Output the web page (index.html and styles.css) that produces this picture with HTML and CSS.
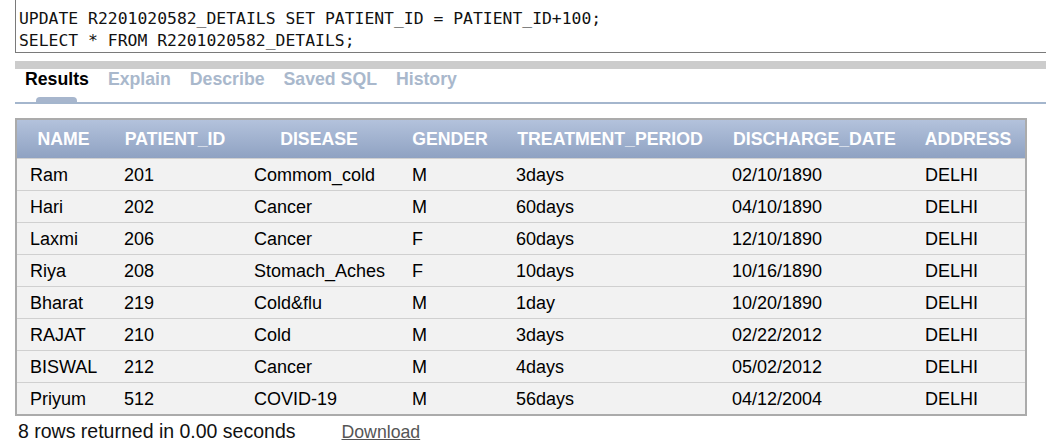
FILE: index.html
```html
<!DOCTYPE html>
<html>
<head>
<meta charset="utf-8">
<link rel="stylesheet" href="styles.css">
</head>
<body>
<div class="page">
  <div class="editor">
    <div class="code">UPDATE R2201020582_DETAILS SET PATIENT_ID = PATIENT_ID+100;</div>
    <div class="code">SELECT * FROM R2201020582_DETAILS;</div>
  </div>
  <div class="divider"></div>
  <div class="tabs">
    <span class="tab active">Results</span>
    <span class="tab">Explain</span>
    <span class="tab">Describe</span>
    <span class="tab">Saved SQL</span>
    <span class="tab">History</span>
  </div>
  <div class="results">
    <table class="grid">
      <colgroup>
        <col class="c1"><col class="c2"><col class="c3"><col class="c4"><col class="c5"><col class="c6"><col class="c7">
      </colgroup>
      <thead>
        <tr><th>NAME</th><th>PATIENT_ID</th><th>DISEASE</th><th>GENDER</th><th>TREATMENT_PERIOD</th><th>DISCHARGE_DATE</th><th>ADDRESS</th></tr>
      </thead>
      <tbody>
        <tr><td>Ram</td><td>201</td><td>Commom_cold</td><td>M</td><td>3days</td><td>02/10/1890</td><td>DELHI</td></tr>
        <tr><td>Hari</td><td>202</td><td>Cancer</td><td>M</td><td>60days</td><td>04/10/1890</td><td>DELHI</td></tr>
        <tr><td>Laxmi</td><td>206</td><td>Cancer</td><td>F</td><td>60days</td><td>12/10/1890</td><td>DELHI</td></tr>
        <tr><td>Riya</td><td>208</td><td>Stomach_Aches</td><td>F</td><td>10days</td><td>10/16/1890</td><td>DELHI</td></tr>
        <tr><td>Bharat</td><td>219</td><td>Cold&amp;flu</td><td>M</td><td>1day</td><td>10/20/1890</td><td>DELHI</td></tr>
        <tr><td>RAJAT</td><td>210</td><td>Cold</td><td>M</td><td>3days</td><td>02/22/2012</td><td>DELHI</td></tr>
        <tr><td>BISWAL</td><td>212</td><td>Cancer</td><td>M</td><td>4days</td><td>05/02/2012</td><td>DELHI</td></tr>
        <tr><td>Priyum</td><td>512</td><td>COVID-19</td><td>M</td><td>56days</td><td>04/12/2004</td><td>DELHI</td></tr>
      </tbody>
    </table>
    <div class="footer">
      <span class="count">8 rows returned in 0.00 seconds</span>
      <a class="download" href="#">Download</a>
    </div>
  </div>
</div>
</body>
</html>
```
FILE: styles.css
```css
html, body {
  margin: 0;
  padding: 0;
  background: #ffffff;
  overflow: hidden;
}
body {
  width: 1046px;
  height: 445px;
  font-family: "Liberation Sans", Arial, sans-serif;
}
.page {
  padding-left: 15px;
}
.editor {
  height: 53px;
  border-left: 1px solid #7a7a7a;
  border-bottom: 1px solid #7a7a7a;
  box-sizing: border-box;
  padding: 8px 0 0 3px;
}
.code {
  font-family: "DejaVu Sans Mono", "Liberation Mono", monospace;
  font-size: 16.4px;
  line-height: 22px;
  color: #111;
  white-space: pre;
}
.divider {
  margin-top: 8px;
  height: 8px;
  background: #cccccc;
}
.tabs {
  display: flex;
  gap: 19px;
  height: 35px;
  box-sizing: border-box;
  padding: 0 0 0 10px;
  border-bottom: 2px solid #a4b6cd;
  align-items: flex-start;
}
.tab {
  position: relative;
  font-size: 17.7px;
  font-weight: bold;
  color: #a9b8cc;
  line-height: 20px;
}
.tab.active {
  color: #000;
}
.tab.active::after {
  content: "";
  position: absolute;
  left: 11px;
  top: 28px;
  width: 41px;
  height: 5px;
  background: #a7b6cd;
  border-radius: 4px 4px 0 0;
}
.results {
  padding-top: 14px;
}
.grid {
  width: 1010px;
  table-layout: fixed;
  border-collapse: collapse;
  border: 2px solid #ababab;
}
.c1 { width: 94px; }
.c2 { width: 130px; }
.c3 { width: 158px; }
.c4 { width: 104px; }
.c5 { width: 216px; }
.c6 { width: 193px; }
.c7 { width: 115px; }
.grid th {
  height: 38px;
  padding: 0;
  font-size: 17.7px;
  font-weight: bold;
  color: #ffffff;
  text-align: center;
  background: linear-gradient(#b3c2dc, #8fa2c2);
  white-space: nowrap;
}
.grid td {
  height: 30px;
  padding: 1px 0 0 14px;
  font-size: 18px;
  color: #000;
  background: #f2f2f2;
  border-top: 1px solid #d0d0d0;
  white-space: nowrap;
  text-align: left;
}
.grid td:first-child {
  padding-left: 13px;
}
.footer {
  display: flex;
  align-items: baseline;
  padding: 4px 0 0 3px;
}
.count {
  font-size: 19.5px;
  color: #111;
}
.download {
  margin-left: 46px;
  font-size: 17.7px;
  color: #555555;
  text-decoration: underline;
}
```
